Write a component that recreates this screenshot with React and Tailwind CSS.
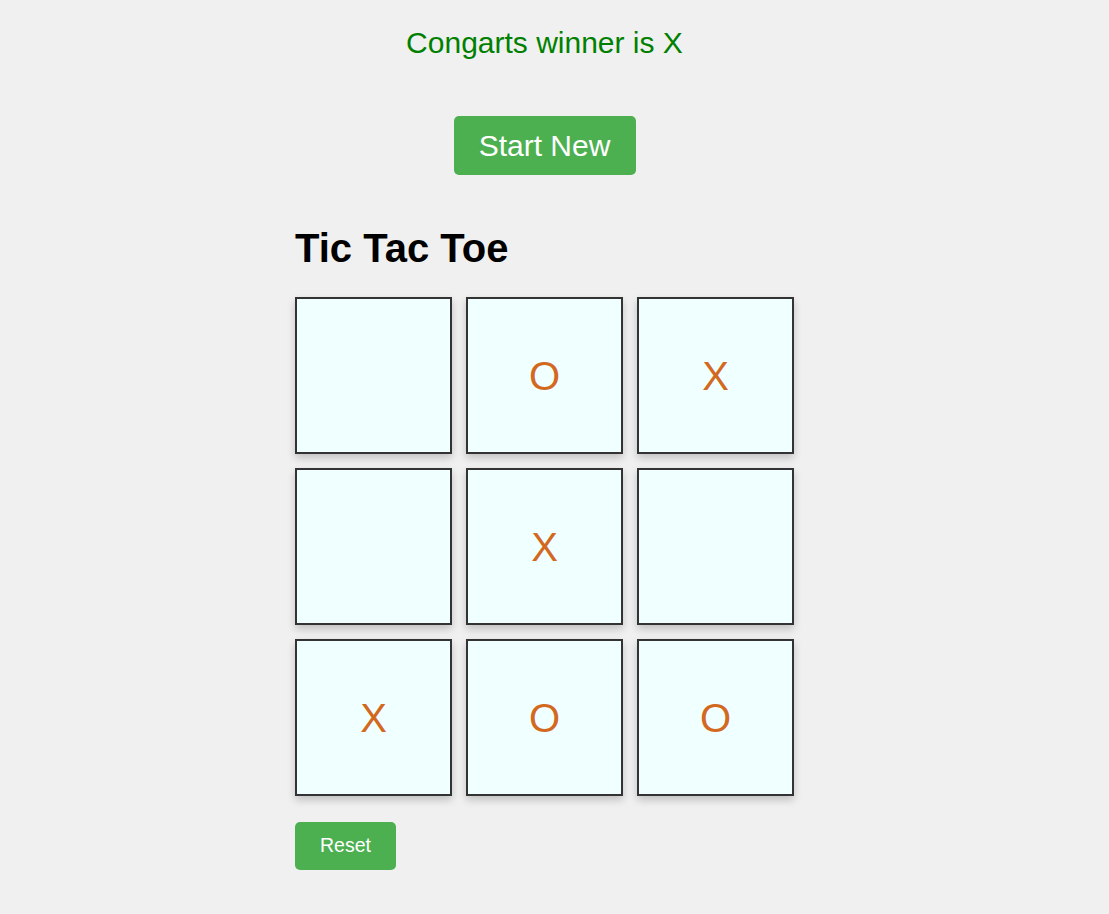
import React from 'react';

const board = ['', 'O', 'X', '', 'X', '', 'X', 'O', 'O'];

export default function App() {
  return (
    <div className="min-h-screen w-full bg-[#f0f0f0] font-['Liberation_Sans',Arial,sans-serif] pr-[20px]">
      <div className="flex flex-col items-center">
        {/* Winner message */}
        <p className="mt-[26px] text-[30px] leading-[34px] text-[#008000]">Congarts winner is X</p>

        <button className="mt-[56px] w-[182px] h-[59px] rounded-[5px] bg-[#4caf50] text-white text-[30px] leading-[34px]">
          Start New
        </button>

        {/* Game */}
        <div className="mt-[50px] w-[499px] flex flex-col">
          <h1 className="text-[40px] leading-[46px] font-bold text-black">Tic Tac Toe</h1>

          <div className="mt-[26px] grid grid-cols-[repeat(3,157px)] gap-[14px]">
            {board.map((v, i) => (
              <div
                key={i}
                className="h-[157px] w-[157px] border-2 border-[#333333] bg-[#f0ffff] shadow-[0_4px_8px_rgba(0,0,0,0.2)] flex items-center justify-center text-[40px] text-[#d2691e]"
              >
                {v}
              </div>
            ))}
          </div>

          <button className="mt-[26px] w-[101px] h-[48px] rounded-[5px] bg-[#4caf50] text-white text-[19.5px]">
            Reset
          </button>
        </div>
      </div>
    </div>
  );
}
